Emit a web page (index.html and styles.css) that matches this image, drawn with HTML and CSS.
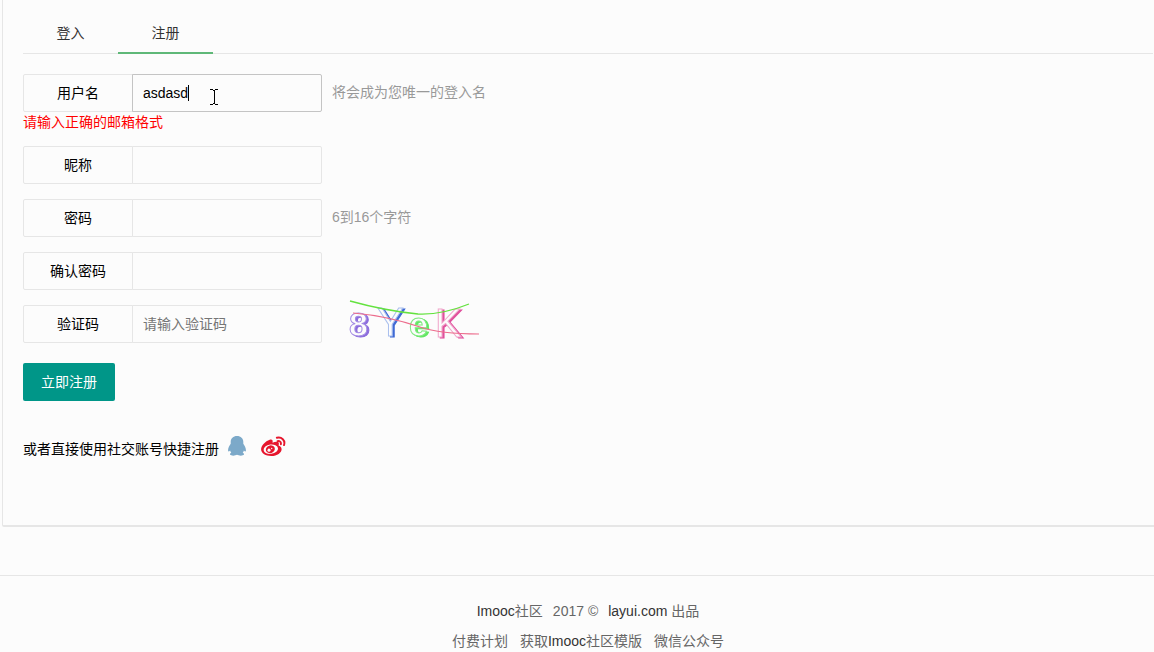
FILE: index.html
```html
<!DOCTYPE html>
<html lang="zh-CN">
<head>
<meta charset="utf-8">
<title>注册</title>
<link rel="stylesheet" href="styles.css">
</head>
<body>
<main class="panel">
  <nav class="tabs">
    <a class="tab" href="#login">登入</a>
    <a class="tab tab-active" href="#register">注册</a>
  </nav>
  <form class="form">
    <div class="row">
      <label class="label" for="username">用户名</label>
      <div class="field">
        <input class="input input-focus" id="username" type="text" value="asdasd">
        <span class="caret"></span>
        <svg class="pointer" width="8" height="16" viewBox="0 0 8 16" aria-hidden="true"><path d="M0 .5h3M5 .5h3M0 15.500h3M5 15.500h3M3 1.500h2M3 14.500h2M4.500 1v14" fill="none" stroke="#000" shape-rendering="crispEdges"/></svg>
      </div>
      <span class="hint">将会成为您唯一的登入名</span>
    </div>
    <p class="error">请输入正确的邮箱格式</p>
    <div class="row">
      <label class="label" for="nickname">昵称</label>
      <div class="field"><input class="input" id="nickname" type="text"></div>
    </div>
    <div class="row">
      <label class="label" for="password">密码</label>
      <div class="field"><input class="input" id="password" type="password"></div>
      <span class="hint">6到16个字符</span>
    </div>
    <div class="row">
      <label class="label" for="confirm">确认密码</label>
      <div class="field"><input class="input" id="confirm" type="password"></div>
    </div>
    <div class="row">
      <label class="label" for="code">验证码</label>
      <div class="field"><input class="input" id="code" type="text" placeholder="请输入验证码"></div>
      <svg class="captcha" width="150" height="50" viewBox="0 0 150 50" role="img" aria-label="验证码图片">
        <text class="glyph glyph-small glyph-violet" x="9" y="40">8</text>
        <text class="glyph glyph-tall glyph-blue" x="37" y="40">Y</text>
        <text class="glyph glyph-small glyph-green" x="69" y="40">e</text>
        <text class="glyph glyph-tall glyph-pink" x="95" y="41">K</text>
        <path d="M10 5Q46 15 78 18Q102 19 129 8" fill="none" stroke="#64e23f" stroke-width="1.300"/>
        <path d="M13 17Q48 20 80 31Q100 38 139 38" fill="none" stroke="#ec6c8c" stroke-width="1.200"/>
      </svg>
    </div>
    <button class="submit" type="button">立即注册</button>
    <div class="social">
      <span class="social-text">或者直接使用社交账号快捷注册</span>
      <a class="social-link" href="#qq" aria-label="QQ">
        <svg width="18" height="20" viewBox="0 0 18 21" preserveAspectRatio="none"><path d="M9 0C5.200 0 2.700 2.600 2.700 6v2.200C1.300 10.200-.2 13.300.1 15.600c.2 1.200 1 .9 2-.3.300 1 .6 1.600 1.200 2.200-1.300.5-1.600 1.600-1.100 2.300.7 1.200 5.200 1.100 6.800 0 1.600 1.100 6.100 1.200 6.800 0 .5-.7.200-1.800-1.100-2.300.6-.6.900-1.200 1.200-2.200 1 1.200 1.800 1.500 2 .3.300-2.300-1.200-5.400-2.600-7.400V6C15.300 2.600 12.800 0 9 0Z" fill="#7ca9c9"/></svg>
      </a>
      <a class="social-link" href="#weibo" aria-label="微博">
        <svg width="25" height="21" viewBox="0 0 26 22"><path d="M9 4C4.500 5.500 0 10.300 0 14c0 4.300 5 7 10.500 7 6.600 0 11-3.800 11-7.200 0-2.200-1.700-3.300-3.200-3.800.9-2.500.2-3.700-1.500-3.900-1.500-.2-3.300.4-4.800 1.100C12.600 4.500 11.500 3.200 9 4Z" fill="#e6162d"/><ellipse cx="10.200" cy="13.800" rx="7.600" ry="4.900" transform="rotate(-8 10.200 13.800)" fill="#fcfcfc"/><ellipse cx="9.700" cy="13.900" rx="4.800" ry="4" transform="rotate(-18 9.700 13.900)" fill="#e6162d"/><circle cx="8.300" cy="14.800" r="1.600" fill="#fcfcfc"/><circle cx="11.100" cy="13.100" r=".7" fill="#fcfcfc"/><path d="M16.500 1.800C21.500.5 25.700 4.700 24 9.500M17.200 5.300c2.200-.5 4 .9 3.500 3.300" fill="none" stroke="#e6162d" stroke-width="2" stroke-linecap="round"/></svg>
      </a>
    </div>
  </form>
</main>
<footer class="footer">
  <p class="footer-line"><a href="#community"><span class="latin">Imooc</span>社区</a><span>2017 ©</span><a href="#layui"><span class="latin">layui.com</span> 出品</a></p>
  <p class="footer-line footer-nav"><a href="#plan">付费计划</a><a href="#template">获取<span class="latin">Imooc</span>社区模版</a><a href="#wechat">微信公众号</a></p>
</footer>
</body>
</html>
```
FILE: styles.css
```css
* { box-sizing: border-box; }
html { scrollbar-width: none; }
body {
  margin: 0;
  background: #fcfcfc;
  color: #000;
  font: 14px/20px "Liberation Sans", "Noto Sans CJK SC", sans-serif;
}
a { color: inherit; text-decoration: none; }
p { margin: 0; }
.panel {
  margin-left: 2px;
  padding: 13px 0 66px 20px;
  border-left: 1px solid #e6e6e6;
  border-bottom: 2px solid #e6e6e6;
  border-bottom-left-radius: 2px;
}
.tabs {
  display: flex;
  margin-right: 1px;
  border-bottom: 1px solid #e6e6e6;
}
.tab {
  width: 95px;
  height: 40px;
  line-height: 40px;
  text-align: center;
  color: #333;
}
.tab-active {
  height: 41px;
  margin-bottom: -1px;
  border-bottom: 2px solid #5fb878;
}
.form { padding-top: 20px; }
.row {
  display: flex;
  height: 38px;
  margin-bottom: 15px;
}
.label {
  width: 110px;
  border: 1px solid #e6e6e6;
  border-radius: 2px 0 0 2px;
  line-height: 36px;
  text-align: center;
}
.field {
  position: relative;
  width: 190px;
  margin-left: -1px;
}
.input {
  display: block;
  width: 100%;
  height: 38px;
  padding: 0 10px;
  border: 1px solid #e6e6e6;
  border-radius: 0 2px 2px 0;
  background: transparent;
  color: #000;
  font: inherit;
  outline: none;
}
.input::placeholder { color: #757575; opacity: 1; }
.input-focus { border-color: #c4c4c4; }
.caret {
  position: absolute;
  left: 56px;
  top: 11px;
  width: 1px;
  height: 16px;
  background: #000;
}
.pointer { position: absolute; left: 78px; top: 15px; }
.hint { margin-left: 10px; line-height: 36px; color: #999; }
.error { margin: -15px 0 14px; color: #f00; }
.captcha {
  flex: none;
  margin: -9px 0 0 18px;
}
.glyph {
  fill: #fcfcfc;
  stroke-width: 1px;
  font-family: "Liberation Sans", sans-serif;
}
.glyph-small { font-size: 34px; font-weight: bold; }
.glyph-tall { font-size: 40px; }
.glyph-violet { stroke: #a48ce4; filter: drop-shadow(2px 1px 0 #8b6bdc); }
.glyph-blue { stroke: #a9bfee; filter: drop-shadow(2px 1px 0 #3f6ad4); }
.glyph-green { stroke: #7eea7e; filter: drop-shadow(2px 1px 0 #5fe65f); }
.glyph-pink { stroke: #f0a8cc; filter: drop-shadow(2px 1px 0 #e0509c); }
.submit {
  display: block;
  height: 38px;
  margin-top: 20px;
  padding: 0 18px;
  border: 0;
  border-radius: 2px;
  background: #009688;
  color: #fff;
  font: inherit;
}
.social {
  display: flex;
  align-items: center;
  margin-top: 32px;
  height: 26px;
}
.social-text { padding-top: 6px; }
.social-link { display: flex; margin-left: 9px; }
.social-link + .social-link { margin-left: 15px; }
.footer {
  margin-top: 48px;
  padding: 20px 0 0 22px;
  border-top: 1px solid #e6e6e6;
  color: #666;
  text-align: center;
}
.footer-line { display: flex; justify-content: center; gap: 10px; line-height: 30px; }
.footer-nav { gap: 12px; }
.latin { color: #333; }
```
